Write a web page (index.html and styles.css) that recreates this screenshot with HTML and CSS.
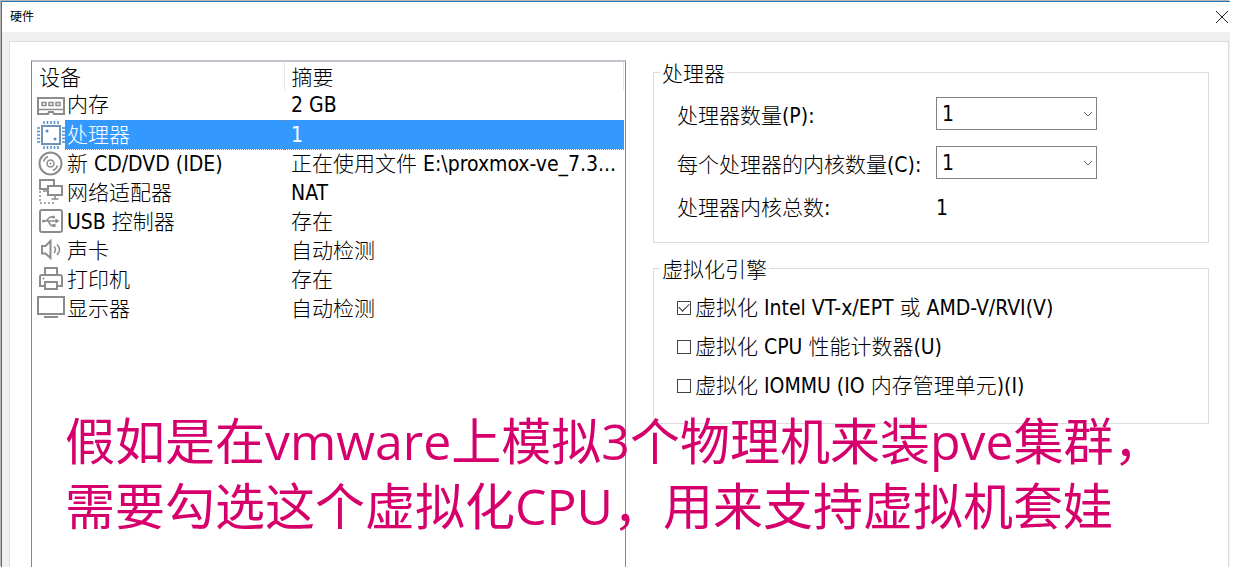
FILE: index.html
```
<!DOCTYPE html>
<html lang="zh-CN">
<head>
<meta charset="UTF-8">
<meta name="viewport" content="width=device-width, initial-scale=1.0">
<title>硬件</title>
<link rel="stylesheet" href="styles.css">
</head>
<body>
<div class="window">
    <header class="titlebar">
        <h1>硬件</h1>
        <button type="button" class="close" aria-label="关闭">
            <svg width="14" height="14" viewBox="0 0 14 14"><path d="M1 1l12 12M13 1L1 13"/></svg>
        </button>
    </header>

    <main class="panel">
        <div class="devices">
            <table>
                <colgroup>
                    <col class="col-icon">
                    <col class="col-name">
                    <col>
                </colgroup>
                <thead>
                    <tr><th colspan="2">设备</th><th>摘要</th></tr>
                </thead>
                <tbody>
                    <tr>
                        <td class="icon"><svg viewBox="0 0 28 28"><path class="thick" d="M1 6h26v16H17l-1-2h-4l-1 2H1z"/><path d="M5 10.500h4v3H5zM12 10.500h4v3h-4zM19 10.500h4v3h-4zM2 17.500h24"/></svg></td>
                        <td>内存</td>
                        <td>2 GB</td>
                    </tr>
                    <tr class="selected">
                        <td class="icon"><svg viewBox="0 0 28 28"><path class="thick" d="M5 5h18v18H5z"/><path d="M7 0v3M10.500 0v3M14 0v3M17.500 0v3M21 0v3M7 25v3M10.500 25v3M14 25v3M17.500 25v3M21 25v3M0 7h3M0 10.500h3M0 14h3M0 17.500h3M0 21h3M25 7h3M25 10.500h3M25 14h3M25 17.500h3M25 21h3"/><circle class="fill" cx="10" cy="10" r="1.500"/><circle class="fill" cx="18" cy="18" r="1.500"/></svg></td>
                        <td>处理器</td>
                        <td>1</td>
                    </tr>
                    <tr>
                        <td class="icon"><svg viewBox="0 0 28 28"><circle class="thick" cx="13.500" cy="13.500" r="11"/><circle cx="13.500" cy="13.500" r="3.500"/><circle class="fill" cx="13.500" cy="13.500" r="1"/><path d="M6.500 11.500q1-3.500 4.500-5M20.500 15.500q-1 3.500-4.500 5"/></svg></td>
                        <td>新 CD/DVD (IDE)</td>
                        <td>正在使用文件 E:\proxmox-ve_7.3...</td>
                    </tr>
                    <tr>
                        <td class="icon"><svg viewBox="0 0 28 28"><path class="thick" d="M10 10H3V1h14v5M11 7h14v9H11z"/><path d="M18 17v3M14.500 20h7M6 12h5"/><path class="dots" d="M3 12v12h15"/></svg></td>
                        <td>网络适配器</td>
                        <td>NAT</td>
                    </tr>
                    <tr>
                        <td class="icon"><svg viewBox="0 0 28 28"><rect class="thick" x="3" y="2" width="22" height="22" rx="2"/><path d="M6 13h14M9 13l4-4h3M11 13l3 4.500h3"/><path class="fill" d="M18.500 10.500l4 2.500-4 2.500z"/><circle class="fill" cx="6.500" cy="13" r="1.500"/><circle class="fill" cx="16.500" cy="9" r="1.500"/><path class="fill" d="M15.500 16h3v3h-3z"/></svg></td>
                        <td>USB 控制器</td>
                        <td>存在</td>
                    </tr>
                    <tr>
                        <td class="icon"><svg viewBox="0 0 28 28"><path class="thick" d="M5 9h3.500L13.500 4v17l-5-4.500H5z"/><path d="M17 9.500q3 3 0 6.500M20 7.500q5 5 0 10.500"/></svg></td>
                        <td>声卡</td>
                        <td>自动检测</td>
                    </tr>
                    <tr>
                        <td class="icon"><svg viewBox="0 0 28 28"><path class="thick" d="M8 9V2h12v7M8 20H3v-9q0-2 2-2h18q2 0 2 2v9h-5M8 16h12v7H8z"/><circle class="fill" cx="6.500" cy="12.500" r="1"/></svg></td>
                        <td>打印机</td>
                        <td>存在</td>
                    </tr>
                    <tr>
                        <td class="icon"><svg viewBox="0 0 28 28"><path class="thick" d="M1 2h26v17H1zM7 22h14"/></svg></td>
                        <td>显示器</td>
                        <td>自动检测</td>
                    </tr>
                </tbody>
            </table>
        </div>

        <form class="settings">
            <fieldset>
                <legend>处理器</legend>
                <div class="fields">
                    <label for="processors">处理器数量(P):</label>
                    <div class="dropdown">
                        <select id="processors"><option>1</option><option>2</option><option>4</option></select>
                        <svg width="10" height="6" viewBox="0 0 10 6"><path d="M1 1l4 4 4-4"/></svg>
                    </div>
                    <label for="cores">每个处理器的内核数量(C):</label>
                    <div class="dropdown">
                        <select id="cores"><option>1</option><option>2</option><option>4</option></select>
                        <svg width="10" height="6" viewBox="0 0 10 6"><path d="M1 1l4 4 4-4"/></svg>
                    </div>
                    <label for="total">处理器内核总数:</label>
                    <output id="total">1</output>
                </div>
            </fieldset>

            <fieldset>
                <legend>虚拟化引擎</legend>
                <div class="options">
                    <label><input type="checkbox" checked>虚拟化 Intel VT-x/EPT 或 AMD-V/RVI(V)</label>
                    <label><input type="checkbox">虚拟化 CPU 性能计数器(U)</label>
                    <label><input type="checkbox">虚拟化 IOMMU (IO 内存管理单元)(I)</label>
                </div>
            </fieldset>
        </form>
    </main>
</div>

<p class="note">假如是在vmware上模拟3个物理机来装pve集群，<br>需要勾选这个虚拟化CPU，用来支持虚拟机套娃</p>
</body>
</html>
```
FILE: styles.css
```
* {
    box-sizing: border-box;
}
body {
    position: relative;
    display: flex;
    min-height: 100vh;
    margin: 0;
    padding: 1px 10px 3px 1px;
    background: #fff;
    color: #000;
    font-family: "DejaVu Sans Condensed", "Noto Sans CJK SC", sans-serif;
    font-size: 21px;
    font-weight: 300;
    line-height: 24px;
}
.window {
    flex: 1;
    display: flex;
    flex-direction: column;
    border-top: 1px solid #2b7ab8;
    border-left: 1px solid #2b7ab8;
    background: #f0f0f0;
    box-shadow: -1px -1px 0 #b4b4b4;
}

/* title bar */
.titlebar {
    display: flex;
    align-items: center;
    justify-content: space-between;
    height: 30px;
    padding: 0 1px 0 8px;
    background: #fff;
}
.titlebar h1 {
    margin: 0;
    font-size: 12px;
    font-weight: 400;
}
.close {
    display: flex;
    padding: 0;
    border: none;
    background: none;
}
.close path {
    fill: none;
    stroke: #222;
}

.panel {
    flex: 1;
    display: grid;
    grid-template-columns: 595fr 556fr;
    gap: 27px;
    margin: 9px 1px 0 7px;
    padding: 18px 19px 0 21px;
    border: 1px solid #dcdcdc;
    border-bottom: none;
    background: #fff;
}

/* device list */
.devices {
    padding-right: 1px;
    border: 1px solid #828790;
    border-top: 2px solid #c3c3cb;
    border-bottom: none;
}
.devices table {
    width: 100%;
    table-layout: fixed;
    border-collapse: collapse;
}
.col-icon {
    width: 33px;
}
.col-name {
    width: 219px;
}
.devices tr {
    height: 29px;
}
.devices th {
    padding: 2px 0 0 7px;
    border-right: 1px solid #e5e5e5;
    font-weight: 300;
    text-align: left;
}
.devices td {
    padding: 0 0 0 2px;
    white-space: nowrap;
}
.devices th + th,
.devices td:last-child {
    padding-left: 7px;
}
.devices .icon {
    padding: 0 0 0 5px;
}
.icon svg {
    display: block;
    width: 28px;
    height: 28px;
    fill: none;
    stroke: #8c8c8c;
    stroke-width: 1.5;
}
.icon .thick {
    stroke-width: 2;
}
.icon .fill {
    fill: #8c8c8c;
    stroke: none;
}
.icon .dots {
    stroke-dasharray: 2 2;
}
.selected td:not(.icon) {
    background: #3399ff;
    color: #fff;
    border-top: 1px dotted #b27845;
    border-bottom: 1px dotted #b27845;
}
.selected .icon svg {
    stroke: #4f8fcb;
}
.selected .icon .thick {
    stroke: #6f93b5;
}
.selected .icon .fill {
    fill: #4f8fcb;
}

/* settings */
fieldset {
    min-width: 0;
    margin: 0 0 13px;
    padding: 0 23px;
    border: 1px solid #dcdcdc;
}
legend {
    margin-left: -17px;
    padding: 4px 2px 0;
    line-height: 20px;
}
.fields {
    display: grid;
    grid-template-columns: 259px 161px;
    grid-template-rows: 33px 33px 22px;
    gap: 16px 0;
    align-items: center;
    padding: 13px 0 25px;
}
.fields label,
.fields output {
    padding-top: 4px;
    line-height: 24px;
}
.dropdown {
    position: relative;
}
.dropdown select {
    display: block;
    appearance: none;
    width: 100%;
    height: 33px;
    padding: 0 5px;
    border: 1px solid #828282;
    border-radius: 0;
    background: #fff;
    color: #000;
    font: inherit;
}
.dropdown svg {
    position: absolute;
    top: 14px;
    right: 4px;
    pointer-events: none;
    fill: none;
    stroke: #666;
}
.options {
    padding: 8px 0 18px;
}
.options label {
    display: flex;
    align-items: center;
    gap: 4px;
    height: 39px;
    white-space: nowrap;
}
.options input {
    appearance: none;
    display: grid;
    place-items: center;
    width: 14px;
    height: 14px;
    margin: 0;
    border: 1px solid #444;
    background: #fff;
}
.options input:checked::after {
    content: "";
    width: 9px;
    height: 5px;
    margin-bottom: 3px;
    border-left: 1px solid #333;
    border-bottom: 1px solid #333;
    transform: rotate(-45deg);
}

/* remark written across the window */
.note {
    position: absolute;
    top: 409px;
    left: 65px;
    margin: 0;
    color: #d6006c;
    font-family: "Open Sans", "Noto Sans CJK SC", sans-serif;
    font-size: 50px;
    font-weight: 400;
    line-height: 65px;
    white-space: nowrap;
}
```
